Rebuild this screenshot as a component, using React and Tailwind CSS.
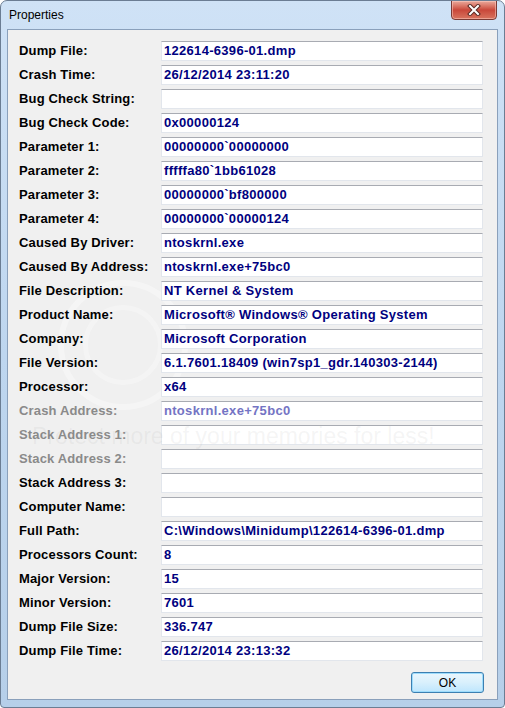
import React from "react";

const rows = [
  ["Dump File:", "122614-6396-01.dmp"],
  ["Crash Time:", "26/12/2014 23:11:20"],
  ["Bug Check String:", ""],
  ["Bug Check Code:", "0x00000124"],
  ["Parameter 1:", "00000000`00000000"],
  ["Parameter 2:", "fffffa80`1bb61028"],
  ["Parameter 3:", "00000000`bf800000"],
  ["Parameter 4:", "00000000`00000124"],
  ["Caused By Driver:", "ntoskrnl.exe"],
  ["Caused By Address:", "ntoskrnl.exe+75bc0"],
  ["File Description:", "NT Kernel & System"],
  ["Product Name:", "Microsoft® Windows® Operating System"],
  ["Company:", "Microsoft Corporation"],
  ["File Version:", "6.1.7601.18409 (win7sp1_gdr.140303-2144)"],
  ["Processor:", "x64"],
  ["Crash Address:", "ntoskrnl.exe+75bc0", true],
  ["Stack Address 1:", "", true],
  ["Stack Address 2:", "", true],
  ["Stack Address 3:", ""],
  ["Computer Name:", ""],
  ["Full Path:", "C:\\Windows\\Minidump\\122614-6396-01.dmp"],
  ["Processors Count:", "8"],
  ["Major Version:", "15"],
  ["Minor Version:", "7601"],
  ["Dump File Size:", "336.747"],
  ["Dump File Time:", "26/12/2014 23:13:32"],
];

export default function App() {
  return (
    <div className="w-[505px] h-[708px] bg-white">
      <div className="relative w-[505px] h-[708px] flex flex-col rounded-t-[7px] rounded-b-[4px] border border-[#6b7d93] bg-gradient-to-b from-[#cfe2f6] via-[#bed6ef] to-[#b6cfe9] overflow-hidden">
        {/* title bar */}
        <div className="h-[28px] shrink-0 flex items-start pl-[8px] pt-[7px]">
          <span className="text-[12px] leading-[14px] text-black [font-family:'Liberation_Sans',Arial,sans-serif]">
            Properties
          </span>
        </div>
        {/* close button */}
        <div className="absolute top-[-1px] right-[7px] w-[46px] h-[20px] rounded-b-[4px] border border-[#7a3a35] bg-gradient-to-b from-[#e9a99c] via-[#c9473a] to-[#d8735f] flex items-center justify-center shadow-[inset_0_0_0_1px_rgba(255,210,200,0.5)]">
          <svg width="14" height="12" viewBox="0 0 14 12">
            <path d="M3 2 L11 10 M11 2 L3 10" stroke="#5a2a24" strokeWidth="4" strokeLinecap="square" />
            <path d="M3 2 L11 10 M11 2 L3 10" stroke="#ffffff" strokeWidth="2" strokeLinecap="square" />
          </svg>
        </div>
        {/* client area */}
        <div className="relative flex-1 mx-[6px] mb-[7px] border border-[#8aa0bb] bg-[#f0f0f0] flex flex-col pt-[9px] pl-[11px] pr-[13px] [font-family:'Liberation_Sans',Arial,sans-serif]">
          {/* watermark (behind content) */}
          <div className="pointer-events-none absolute left-[50px] top-[250px] w-[130px] h-[130px] rounded-full border-[6px] border-[rgba(255,255,255,0.35)]" />
          <div className="pointer-events-none absolute left-[75px] top-[275px] w-[80px] h-[80px] rounded-full border-[5px] border-[rgba(255,255,255,0.3)]" />
          {rows.map(([label, value, disabled]) => (
            <div key={label} className="relative h-[24px] flex items-center">
              <div
                className={
                  "w-[142px] shrink-0 text-[13px] font-bold tracking-[0.15px] " +
                  (disabled ? "text-[#8a8a8a]" : "text-black")
                }
              >
                {label}
              </div>
              <div className="w-[322px] h-[20px] bg-white border border-[#e2e6ec] border-t-[#a8abb2] flex items-center pl-[2px]">
                <span
                  className={
                    "text-[13px] font-bold tracking-[0.3px] whitespace-nowrap " +
                    (disabled ? "text-[#7474c4]" : "text-[#000080]")
                  }
                >
                  {value}
                </span>
              </div>
            </div>
          ))}
          <div className="flex justify-end mt-[9px]">
            <div className="w-[73px] h-[21px] rounded-[3px] border border-[#3c7fb1] bg-gradient-to-b from-[#eaf6fd] via-[#d9f0fc] to-[#bee6fd] flex items-center justify-center shadow-[inset_0_0_0_1px_#9ddcfc]">
              <span className="text-[12px] text-black [font-family:'Liberation_Sans',Arial,sans-serif]">OK</span>
            </div>
          </div>
          <div className="pointer-events-none absolute left-[24px] top-[393px] text-[23px] leading-[26px] whitespace-nowrap text-[rgba(150,150,150,0.10)] [font-family:'Liberation_Sans',Arial,sans-serif]">
            Protect more of your memories for less!
          </div>
        </div>
      </div>
    </div>
  );
}
